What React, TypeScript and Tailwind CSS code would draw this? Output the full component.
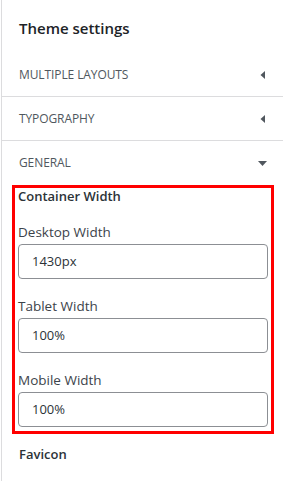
import React from "react";

const font = { fontFamily: '"Open Sans", "Noto Sans", sans-serif' };

function ArrowLeft() {
  return (
    <svg width="5" height="8" viewBox="0 0 5 8" className="mr-[2px] text-[#50575e]">
      <path d="M5 0 L0.5 4 L5 8 Z" fill="currentColor" />
    </svg>
  );
}

function ArrowDown() {
  return (
    <svg width="9" height="5" viewBox="0 0 9 5" className="text-[#50575e]">
      <path d="M0 0 L9 0 L4.5 5 Z" fill="currentColor" />
    </svg>
  );
}

function Section({ title, open, last }: { title: string; open?: boolean; last?: boolean }) {
  return (
    <div
      className={
        "h-[44px] flex items-center justify-between pl-[17px] pr-[16px] " +
        (last ? "" : "border-b border-[#dcdcde]")
      }
    >
      <span className="text-[12px] uppercase text-[#50575e] tracking-[-0.1px]">{title}</span>
      {open ? <ArrowDown /> : <ArrowLeft />}
    </div>
  );
}

function Field({ label, value, first }: { label: string; value: string; first?: boolean }) {
  return (
    <div className={first ? "mt-[19px]" : "mt-[18px]"}>
      <div className="text-[13.5px] leading-[18px] text-[#3c434a]">{label}</div>
      <div className="mt-[3px] h-[35px] rounded-[4px] border border-[#8c8f94] flex items-center pl-[13px] text-[13px] text-[#2c3338]">
        {value}
      </div>
    </div>
  );
}

export default function App() {
  return (
    <div className="w-[283px] h-[481px] bg-white pl-px overflow-hidden" style={font}>
      <div className="h-full border-l border-[#dcdcde]">
        {/* Header */}
        <div className="h-[53px] pt-[18px] pl-[17px]">
          <h2 className="text-[15px] leading-[20px] font-semibold text-[#1d2327]">Theme settings</h2>
        </div>

        <Section title="Multiple Layouts" />
        <Section title="Typography" />
        <Section title="General" open last />

        {/* Highlighted group */}
        <div className="ml-[10px] w-[262px] border-[3px] border-[#ff0000] px-[3px] pb-[4px]">
          <div className="text-[13px] leading-[16px] font-semibold text-[#2c3338]">Container Width</div>
          <Field label="Desktop Width" value="1430px" first />
          <Field label="Tablet Width" value="100%" />
          <Field label="Mobile Width" value="100%" />
        </div>

        <div className="mt-[11px] pl-[17px] text-[13px] leading-[18px] font-semibold text-[#2c3338]">Favicon</div>
      </div>
    </div>
  );
}
